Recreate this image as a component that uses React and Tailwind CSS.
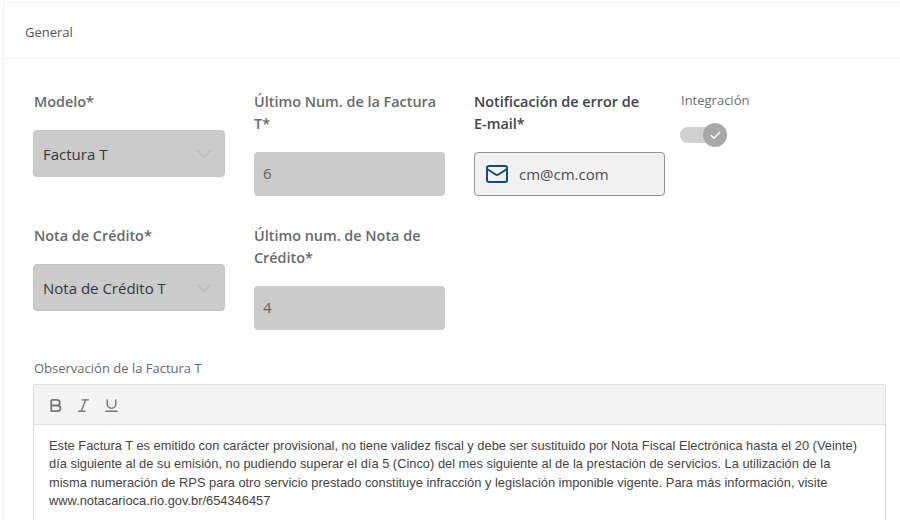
import React from 'react';
import { Bold, Italic, Underline, Mail, ChevronDown, Check } from 'lucide-react';

const SelectField = ({ label, value }) => (
  <div className="w-[191px] mr-[29px]">
    <label className="block pt-[1px] text-[14.4px] leading-[22px] font-semibold text-[#666a6d] mb-[17px]">{label}</label>
    <div className="-ml-[1px] w-[192px] h-[47px] flex items-center justify-between pl-[9px] pr-[7px] rounded-[4px] bg-[#cbcbcb] border border-[#c4c4c4] text-[15px] text-[#33383c]">
      <span className="pt-[2px]">{value}</span>
      <ChevronDown size={26} strokeWidth={1.25} className="text-[#babcc2]" />
    </div>
  </div>
);

const NumberField = ({ label, value }) => (
  <div className="w-[191px] mr-[29px]">
    <label className="block pt-[1px] text-[14.4px] leading-[22px] font-semibold text-[#666a6d] mb-[17px]">{label}</label>
    <div className="h-[44px] flex items-center pl-[9px] pb-[2px] rounded-[4px] bg-[#cbcbcb] text-[15px] text-[#5f6366]">{value}</div>
  </div>
);

export default function App() {
  return (
    <div className="w-[900px] h-[520px] overflow-hidden bg-white pl-[3px] pt-[2px] font-['Open_Sans',sans-serif]">
      <div className="h-[600px] border-l border-t border-[#f0f0f0] rounded-tl-[3px]">
        <div className="h-[56px] flex items-center pl-[21px] pt-[5px] border-b border-[#f2f2f2] text-[13px] text-[#50555a]">General</div>

        <div className="pt-[31px] pl-[30px]">
          <div className="flex h-[134px]">
            <SelectField label="Modelo*" value="Factura T" />
            <NumberField label={<>Último Num. de la Factura<br />T*</>} value="6" />
            <div className="w-[191px]">
              <label className="block pt-[1px] text-[14.4px] leading-[22px] font-semibold text-[#3e4347] mb-[17px]">Notificación de error de<br />E-mail*</label>
              <div className="h-[44px] flex items-center pl-[10px] gap-[10px] rounded-[4px] bg-[#f1f1f1] border border-[#8f9193] text-[15px] text-[#4a4e52]">
                <Mail size={24} strokeWidth={2} className="text-[#134e77]" />
                <span>cm@cm.com</span>
              </div>
            </div>
            <div className="ml-[16px]">
              <div className="text-[13px] leading-[20px] text-[#6a6e72]">Integración</div>
              <div className="relative -ml-[1px] mt-[17px] w-[47px] h-[16px] rounded-full bg-[#cfcfcf]">
                <div className="absolute right-0 top-[-4px] w-[24px] h-[24px] rounded-full bg-[#a8a8a8] flex items-center justify-center">
                  <Check size={13} strokeWidth={2.5} className="text-white" />
                </div>
              </div>
            </div>
          </div>

          <div className="flex h-[132px]">
            <SelectField label="Nota de Crédito*" value="Nota de Crédito T" />
            <NumberField label={<>Último num. de Nota de<br />Crédito*</>} value="4" />
          </div>

          <div className="mt-[2px] text-[13px] leading-[20px] text-[#666a6d] mb-[6px]">Observación de la Factura T</div>
          <div className="-ml-[1px] w-[853px] border border-[#dedede] rounded-t-[2px] font-['Liberation_Sans',sans-serif]">
            <div className="h-[40px] flex items-center gap-[11px] pl-[13px] pt-[1px] bg-[#f4f4f4] border-b border-[#dedede] text-[#757575]">
              <Bold size={17} strokeWidth={2.5} />
              <Italic size={17} strokeWidth={2} />
              <Underline size={17} strokeWidth={2} />
            </div>
            <div className="pt-[12px] pl-[15px] pr-[20px] h-[120px] text-[12.87px] leading-[18.4px] text-[#444444]">
              Este Factura T es emitido con carácter provisional, no tiene validez fiscal y debe ser sustituido por Nota Fiscal Electrónica hasta el 20 (Veinte) día siguiente al de su emisión, no pudiendo superar el día 5 (Cinco) del mes siguiente al de la prestación de servicios. La utilización de la misma numeración de RPS para otro servicio prestado constituye infracción y legislación imponible vigente. Para más información, visite www.notacarioca.rio.gov.br/654346457
            </div>
          </div>
        </div>
      </div>
    </div>
  );
}
